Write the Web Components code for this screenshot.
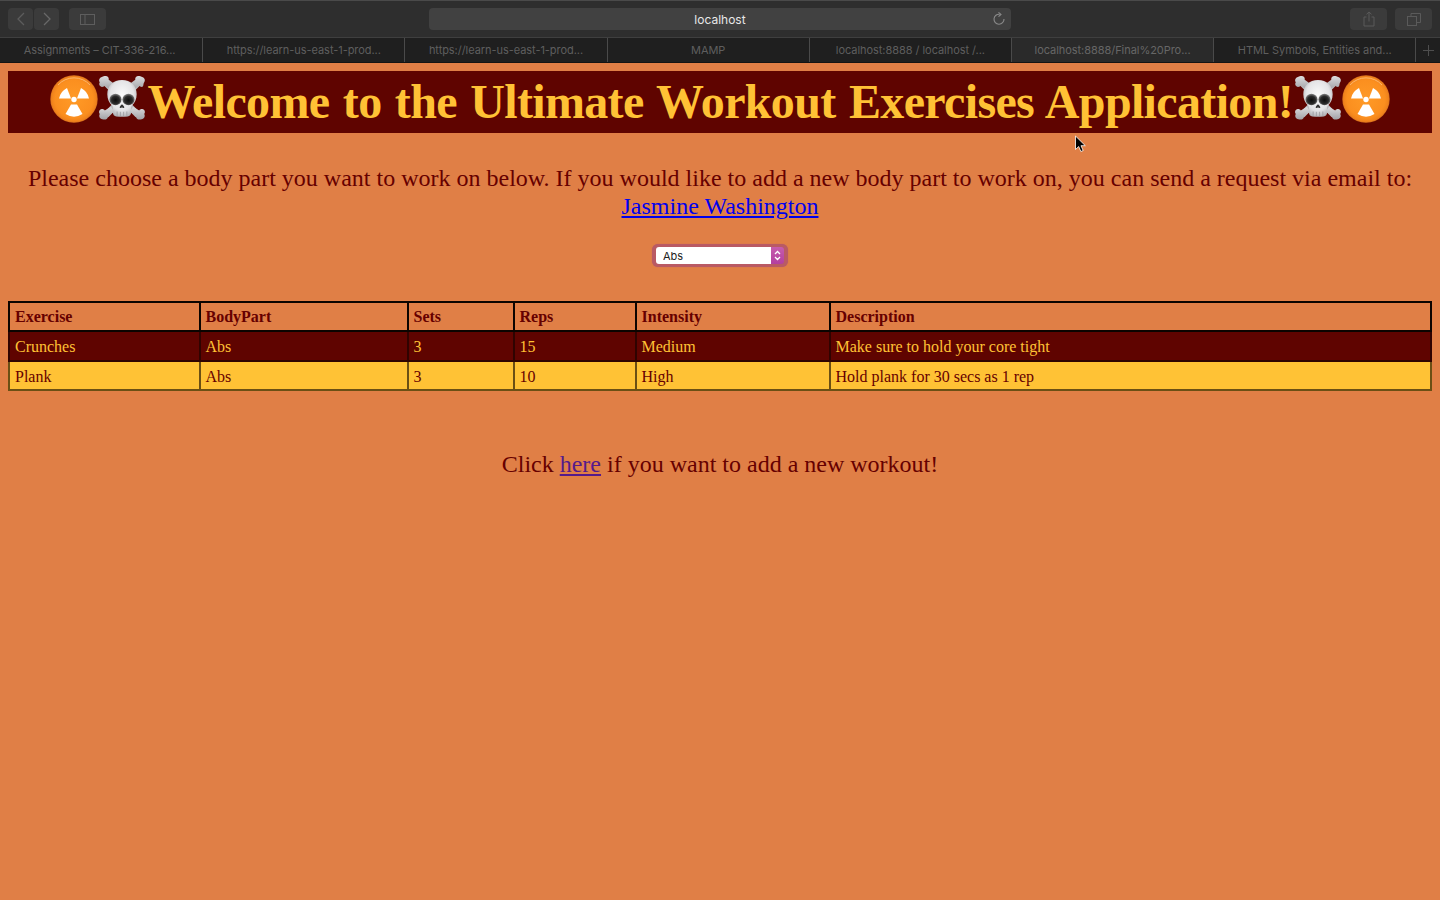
<!DOCTYPE html>
<html lang="en">
<head>
<meta charset="utf-8">
<title>Ultimate Workout Exercises</title>
<style>
  html, body { margin: 0; height: 100%; }
  body { background: #e07f46; font-family: "Liberation Serif", serif; color: #660000; }
</style>
</head>
<body>
<browser-chrome></browser-chrome>
<page-content>
  <welcome-banner>Welcome to the Ultimate Workout Exercises Application!</welcome-banner>
  <intro-text>
    Please choose a body part you want to work on below. If you would like to add a new body part to work on, you can send a request via email to:
    <a slot="link" href="#">Jasmine Washington</a>
  </intro-text>
  <part-select></part-select>
  <exercise-table></exercise-table>
  <add-workout></add-workout>
</page-content>
<mouse-cursor></mouse-cursor>

<script>
// ==================================================
// BROWSER CHROME
// ==================================================
class TabItem extends HTMLElement {
  constructor() {
    super();
    this.attachShadow({ mode: "open" });
    this.shadowRoot.innerHTML = `
      <style>
        :host {
          display: flex; align-items: center; justify-content: center;
          border-right: 1px solid #4a4a4a; color: #5e5e5e; min-width: 0;
          background: #1f1f1f; box-sizing: border-box; letter-spacing: -.05px;
          font: 11px Inter, "Liberation Sans", sans-serif;
        }
        :host([active]) { background: #2a2a2a; color: #666; }
      </style>
      <slot></slot>
    `;
  }
}
customElements.define("tab-item", TabItem);

class ToolButton extends HTMLElement {
  constructor() {
    super();
    this.attachShadow({ mode: "open" });
    this.shadowRoot.innerHTML = `
      <style>
        :host {
          display: flex; align-items: center; justify-content: center; flex: none;
          height: 22px; width: 37px; background: #3b3b3b; border-radius: 4px;
        }
        ::slotted(svg) { display: block; }
      </style>
      <slot></slot>
    `;
  }
}
customElements.define("tool-button", ToolButton);

class BrowserChrome extends HTMLElement {
  constructor() {
    super();
    this.attachShadow({ mode: "open" });
    this.shadowRoot.innerHTML = `
      <style>
        :host { display: block; height: 63px; background: #1f1f1f; }
        .toolbar {
          height: 38px; box-sizing: border-box; padding: 7px 8px 0;
          display: flex; align-items: flex-start;
          background: #2e2e2e; border-top: 1px solid #4a4a4a; border-bottom: 1px solid #3f3f3f;
        }
        .nav { width: 25px; }
        .next { margin-left: 1px; }
        .side { margin-left: 10px; }
        .url {
          margin: 0 339px 0 323px; width: 582px; flex: none; height: 22px; border-radius: 4px; background: #414141;
          display: flex; align-items: center; justify-content: center; position: relative;
          color: #e8e8e8; font: 12px Inter, "Liberation Sans", sans-serif;
        }
        .url svg { position: absolute; right: 5px; top: 4px; }
        .copy { margin-left: 8px; }
        .tabs {
          height: 25px; display: grid; box-sizing: border-box; padding-left: 1px;
          grid-template-columns: repeat(7, 202.2px) 1fr;
          border-bottom: 1px solid #141414;
        }
        .first { margin-left: -1px; padding-right: 3px; }
        .plus { display: flex; align-items: center; justify-content: center; }
      </style>
      <div class="toolbar">
        <tool-button class="nav"><svg width="12" height="14" viewBox="0 0 12 14" fill="none" stroke="#5c5c5c" stroke-width="1.3"><path d="M9 1 3 7l6 6"/></svg></tool-button>
        <tool-button class="nav next"><svg width="12" height="14" viewBox="0 0 12 14" fill="none" stroke="#686868" stroke-width="1.3"><path d="m3 1 6 6-6 6"/></svg></tool-button>
        <tool-button class="side"><svg width="15" height="11" viewBox="0 0 15 11" fill="none" stroke="#5e5e5e"><rect x=".5" y=".5" width="14" height="10"/><path d="M5 .5v10"/></svg></tool-button>
        <div class="url">localhost
          <svg width="14" height="14" viewBox="0 0 14 14" fill="none" stroke="#8a8a8a" stroke-width="1.1"><path d="M7.8 2.3A5 5 0 1 0 12 7"/><path d="M6.5 .4 9 2.4 6.5 4.6" /></svg>
        </div>
        <tool-button class="share"><svg width="12" height="16" viewBox="0 0 12 16" fill="none" stroke="#5a5a5a"><path d="M3.5 6H1v9h10V6H8.500M6 10.500V1M3.500 3.300 6 1l2.500 2.300"/></svg></tool-button>
        <tool-button class="copy"><svg width="14" height="13" viewBox="0 0 14 13" fill="none" stroke="#5a5a5a"><rect x=".5" y="3.500" width="9" height="9"/><path d="M4 3.500V.5h9.500v9h-4"/></svg></tool-button>
      </div>
      <div class="tabs">
        <tab-item class="first">Assignments – CIT-336-216...</tab-item>
        <tab-item>https://learn-us-east-1-prod...</tab-item>
        <tab-item>https://learn-us-east-1-prod...</tab-item>
        <tab-item>MAMP</tab-item>
        <tab-item>localhost:8888 / localhost /...</tab-item>
        <tab-item active>localhost:8888/Final%20Pro...</tab-item>
        <tab-item>HTML Symbols, Entities and...</tab-item>
        <div class="plus"><svg width="11" height="11" viewBox="0 0 11 11" stroke="#4e4e4e"><path d="M5.500 0v11M0 5.500h11"/></svg></div>
      </div>
    `;
  }
}
customElements.define("browser-chrome", BrowserChrome);

// ==================================================
// EMOJI ICONS
// ==================================================
let iconIds = 0;

class RadioactiveIcon extends HTMLElement {
  constructor() {
    super();
    const id = "rad" + (++iconIds);
    this.attachShadow({ mode: "open" });
    this.shadowRoot.innerHTML = `
      <style>:host { display: inline-block; width: 48px; height: 48px; flex: none; } svg { display: block; }</style>
      <svg width="48" height="48" viewBox="-24 -24 48 48">
        <defs>
          <radialGradient id="${id}" cx="50%" cy="50%" r="50%">
            <stop offset="0" stop-color="#ff9a26"/>
            <stop offset=".8" stop-color="#fb8f1f"/>
            <stop offset=".94" stop-color="#f0831c"/>
            <stop offset="1" stop-color="#d8701c"/>
          </radialGradient>
        </defs>
        <circle r="23.700" fill="url(#${id})"/>
        <path d="M-16-14A21.500 21.500 0 0 1 16-14" fill="none" stroke="#ffc98a" stroke-width="1" opacity=".7"/>
        <g fill="#fff">
          <path d="M-7-11-3-.5h-12A15 15 0 0 1-7-11Z"/>
          <path d="M7-11 3-.5h12A15 15 0 0 0 7-11Z"/>
          <path d="M-3 5.500h6L8.500 15A16 16 0 0 1-8.500 15Z"/>
          <circle cy=".5" r="2.700"/>
        </g>
      </svg>
    `;
  }
}
customElements.define("radioactive-icon", RadioactiveIcon);

class SkullIcon extends HTMLElement {
  constructor() {
    super();
    const id = "skull" + (++iconIds);
    this.attachShadow({ mode: "open" });
    this.shadowRoot.innerHTML = `
      <style>:host { display: inline-block; width: 48px; height: 48px; flex: none; } svg { display: block; }</style>
      <svg width="48" height="48" viewBox="0 0 48 48">
        <defs>
          <radialGradient id="${id}h" cx="50%" cy="42%" r="62%">
            <stop offset="0" stop-color="#fbfbfb"/><stop offset=".65" stop-color="#e4e4e6"/><stop offset="1" stop-color="#a9a9ad"/>
          </radialGradient>
          <linearGradient id="${id}b" x1="0" y1="0" x2="0" y2="1">
            <stop offset="0" stop-color="#dcdcde"/><stop offset="1" stop-color="#a2a2a6"/>
          </linearGradient>
          <radialGradient id="${id}e" cx="50%" cy="55%" r="55%">
            <stop offset="0" stop-color="#0c0c0c"/><stop offset=".6" stop-color="#2a2a2a"/><stop offset="1" stop-color="#8a8a8a"/>
          </radialGradient>
        </defs>
        <path d="M8 8 40 40M40 8 8 40" stroke="#b9b9bc" stroke-width="6.500" fill="none"/>
        <g fill="url(#${id}b)">
          <path transform="translate(-2.500 -1)" d="M6.500 3.100c-2.600.5-3.600 3.400-2.200 5.200-1.300 1.700-.2 4.500 2.300 4.600 1.400 0 2.300-.8 2.900-1.500l5.500 4 4-5.400-5.800-4.200c.3-1.200-.2-2.600-1.300-3.200-.1-.2-2.700-1.300-5.400.5Z"/>
          <path transform="translate(2.500 -1)" d="M41.500 3.100c2.600.5 3.600 3.400 2.200 5.200-1.300 1.700-.2 4.500-2.300 4.600-1.400 0-2.300-.8-2.900-1.500l-5.500 4-4-5.400 5.800-4.200c-.3-1.200.2-2.600 1.300-3.200.1-.2 2.700-1.300 5.400.5Z"/>
          <path transform="translate(-2.500 0)" d="M6.800 44.300c-2.600-.5-3.800-3.300-2.500-5.300-1.500-1.600-.6-4.600 1.900-4.900 1.400-.2 2.500.6 3.100 1.300l6.200-3.600 3.300 5-6.300 3.800c.2 1.300-.2 2.600-1.300 3.400-.8.600-2.400.8-4.400.3Z"/>
          <path transform="translate(2.500 0)" d="M41.200 44.300c2.600-.5 3.800-3.300 2.500-5.300 1.500-1.600.6-4.600-1.900-4.900-1.400-.2-2.500.6-3.100 1.300l-6.200-3.600-3.300 5 6.300 3.800c-.2 1.300.2 2.600 1.300 3.400.8.600 2.400.8 4.400.3Z"/>
        </g>
        <g transform="translate(24 22) scale(1.080 1) translate(-24 -22)">
          <path d="M24 5c-8.200 0-13.600 5.800-13.600 14.300 0 5 1.800 8.600 4.200 11 .7.700 1 1.500 1 2.400v5c0 2 1.200 3.300 3.100 3.700 3.500.6 7.100.6 10.600 0 1.900-.4 3.100-1.700 3.100-3.700v-5c0-.9.300-1.700 1-2.400 2.400-2.400 4.200-6 4.200-11C37.600 10.800 32.200 5 24 5Z" fill="url(#${id}h)"/>
          <ellipse cx="18" cy="24.500" rx="5.600" ry="5.800" fill="url(#${id}e)"/>
          <ellipse cx="30" cy="24.500" rx="5.600" ry="5.800" fill="url(#${id}e)"/>
          <path d="M24 29.500c-.8 0-2.100 2-2.100 3 0 .8 1 .7 2.100.1 1.100.6 2.100.7 2.100-.1 0-1-1.300-3-2.100-3Z" fill="#333"/>
          <path d="M19.500 36.500v4.300M22.500 36.800v4.300M25.500 36.800v4.300M28.500 36.500v4.300" stroke="#9a9a9d" stroke-width=".8"/>
        </g>
      </svg>
    `;
  }
}
customElements.define("skull-icon", SkullIcon);

// ==================================================
// PAGE
// ==================================================
class PageContent extends HTMLElement {
  constructor() {
    super();
    this.attachShadow({ mode: "open" });
    this.shadowRoot.innerHTML = `
      <style>:host { display: block; padding: 8px; color: #660000; font-family: "Liberation Serif", serif; }</style>
      <slot></slot>
    `;
  }
}
customElements.define("page-content", PageContent);

class WelcomeBanner extends HTMLElement {
  constructor() {
    super();
    this.attachShadow({ mode: "open" });
    this.shadowRoot.innerHTML = `
      <style>
        :host {
          display: flex; align-items: center; justify-content: center; height: 62px;
          background: #5f0400; color: #ffc235;
          font: bold 48px/62px "Liberation Serif", serif; white-space: nowrap;
          letter-spacing: -.65px; word-spacing: 2px;
        }
        radioactive-icon, skull-icon { margin-bottom: 7px; }
        .before { margin-right: 1.500px; }
        .after { margin-left: 1px; }
      </style>
      <radioactive-icon></radioactive-icon><skull-icon class="before"></skull-icon><slot></slot><skull-icon class="after"></skull-icon><radioactive-icon></radioactive-icon>
    `;
  }
}
customElements.define("welcome-banner", WelcomeBanner);

class IntroText extends HTMLElement {
  constructor() {
    super();
    this.attachShadow({ mode: "open" });
    this.shadowRoot.innerHTML = `
      <style>
        :host { display: block; margin-top: 31px; text-align: center; font-size: 24px; line-height: 28px; }
        ::slotted(a) { color: #0000ee; text-decoration: underline; }
      </style>
      <slot></slot><br><slot name="link"></slot>
    `;
  }
}
customElements.define("intro-text", IntroText);

class PartSelect extends HTMLElement {
  constructor() {
    super();
    this.attachShadow({ mode: "open" });
    this.shadowRoot.innerHTML = `
      <style>
        :host { display: flex; justify-content: center; margin-top: 24px; }
        .ring {
          width: 136px; height: 23px; box-sizing: border-box; padding: 3px 4px;
          background: #b95a64; border-radius: 6px; position: relative; box-shadow: 0 0 1px #b95a64;
        }
        select {
          display: block; width: 100%; height: 100%; box-sizing: border-box; margin: 0;
          appearance: none; -webkit-appearance: none; border: 0; outline: 0; border-radius: 3px;
          background: linear-gradient(to right, #fff 115px, transparent 115px), linear-gradient(#c75cae, #b33f9f);
          padding: 0 0 0 7px; color: #222; font: 11px Inter, "Liberation Sans", sans-serif;
        }
        svg { position: absolute; right: 5px; top: 5px; pointer-events: none; }
      </style>
      <div class="ring">
        <select aria-label="Body part"><option>Abs</option></select>
        <svg width="11" height="13" viewBox="0 0 11 13" fill="none" stroke="#fff" stroke-width="1.300"><path d="m3 5 2.500-2.500L8 5M3 8l2.500 2.500L8 8"/></svg>
      </div>
    `;
  }
}
customElements.define("part-select", PartSelect);

class ExerciseTable extends HTMLElement {
  constructor() {
    super();
    this.attachShadow({ mode: "open" });
    const rows = [
      ["Crunches", "Abs", "3", "15", "Medium", "Make sure to hold your core tight"],
      ["Plank", "Abs", "3", "10", "High", "Hold plank for 30 secs as 1 rep"]
    ];
    const heads = ["Exercise", "BodyPart", "Sets", "Reps", "Intensity", "Description"];
    this.shadowRoot.innerHTML = `
      <style>
        :host { display: block; margin-top: 34px; font-size: 16px; }
        table { width: 100%; table-layout: fixed; border-collapse: collapse; box-sizing: border-box; }
        th, td { padding: 1px 0 0 5px; text-align: left; font-size: 16px; line-height: 18px; }
        th { height: 26px; border: 2px solid #0b0400; color: #660000; font-weight: bold; }
        td { height: 27px; border: 2px solid #6b4f14; }
        tr.a td { background: #5f0400; color: #ffc235; border-color: #2f0300; border-top-color: #0b0400; }
        tr.b td { background: #ffc235; color: #660000; height: 25px; padding-top: 2px; }
        col:nth-child(1) { width: 190.500px; } col:nth-child(2) { width: 208px; }
        col:nth-child(3) { width: 106px; } col:nth-child(4) { width: 122px; } col:nth-child(5) { width: 194px; }
      </style>
      <table>
        <colgroup><col><col><col><col><col><col></colgroup>
        <tr>${heads.map(h => `<th>${h}</th>`).join("")}</tr>
        ${rows.map((r, i) => `<tr class="${i ? "b" : "a"}">${r.map(c => `<td>${c}</td>`).join("")}</tr>`).join("")}
      </table>
    `;
  }
}
customElements.define("exercise-table", ExerciseTable);

class AddWorkout extends HTMLElement {
  constructor() {
    super();
    this.attachShadow({ mode: "open" });
    this.shadowRoot.innerHTML = `
      <style>
        :host { display: block; margin-top: 59px; text-align: center; font-size: 24px; line-height: 28px; }
        a { color: #551a8b; text-decoration: underline; }
      </style>
      Click <a href="#">here</a> if you want to add a new workout!
    `;
  }
}
customElements.define("add-workout", AddWorkout);

class MouseCursor extends HTMLElement {
  constructor() {
    super();
    this.attachShadow({ mode: "open" });
    this.shadowRoot.innerHTML = `
      <style>:host { position: absolute; left: 1075px; top: 135px; width: 12px; height: 19px; pointer-events: none; } svg { display: block; }</style>
      <svg width="12" height="19" viewBox="0 0 12 18"><path d="M.5.500v13.500l3.200-3 2.200 5 2.300-1-2.200-4.800h4.300Z" fill="#000" stroke="#fff" stroke-width=".8"/></svg>
    `;
  }
}
customElements.define("mouse-cursor", MouseCursor);
</script>
</body>
</html>
